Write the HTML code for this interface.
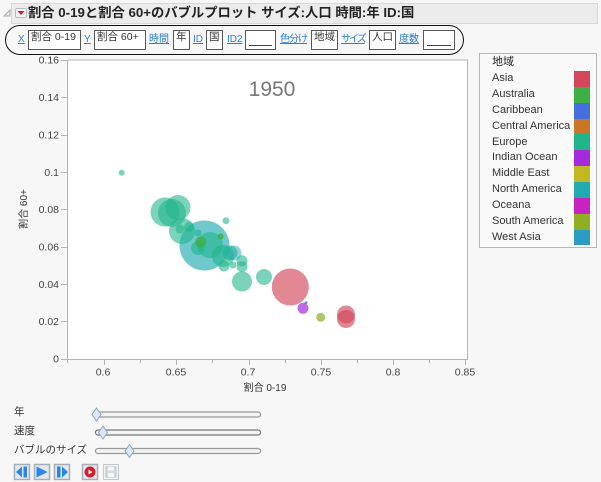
<!DOCTYPE html>
<html><head><meta charset="utf-8">
<style>
html,body{margin:0;padding:0}
body{width:601px;height:482px;overflow:hidden;background:#f7f7f7;position:relative;font-family:"Liberation Sans","Noto Sans CJK JP",sans-serif;font-size:10px;color:#333}
.a{position:absolute;white-space:nowrap;line-height:12px}
.t{font-size:11px;line-height:12px}
.l{color:#2a7fd4;text-decoration:underline;font-size:10px}
.b{position:absolute;top:30px;height:20px;border:1px solid #555;background:#fff;box-sizing:border-box;font-size:10.500px;line-height:13px;padding-top:0;padding-left:2px;white-space:nowrap;color:#333}
.u{position:absolute;left:3px;right:3px;bottom:3px;height:1px;background:#444}
</style></head><body>
<div style="position:absolute;left:11px;top:3px;width:587px;height:21px;background:#ececec;border:1px solid #d8d8d8;box-sizing:border-box"></div>
<svg style="position:absolute;left:0;top:0" width="30" height="24"><path d="M4 16L10 10V16Z" fill="#e8e8e8" stroke="#aaa"/><rect x="15.500" y="8.500" width="11" height="9" rx="1.500" fill="#f4f4f4" stroke="#bbb"/><path d="M17.500 11H24.500L21 15Z" fill="#d4142a"/></svg>
<div class="a" style="left:28px;top:5px;font-size:13.300px;line-height:16px;font-weight:bold;color:#222">割合 0-19と割合 60+のバブルプロット サイズ:人口 時間:年 ID:国</div>
<div style="position:absolute;left:5px;top:25px;width:459px;height:30px;border:1.500px solid #111;border-radius:15px;box-sizing:border-box"></div>
<span class="a l" style="left:18px;top:34px">X</span>
<div class="b" style="left:28px;width:53px">割合 0-19</div>
<span class="a l" style="left:84px;top:34px">Y</span>
<div class="b" style="left:94px;width:52px">割合 60+</div>
<span class="a l" style="left:149px;top:34px">時間</span>
<div class="b" style="left:173px;width:17px">年</div>
<span class="a l" style="left:193px;top:34px">ID</span>
<div class="b" style="left:206px;width:17px">国</div>
<span class="a l" style="left:227px;top:34px">ID2</span>
<div class="b" style="left:245px;width:31px"><div class="u"></div></div>
<span class="a l" style="left:280px;top:34px;letter-spacing:-1px">色分け</span>
<div class="b" style="left:311px;width:27px">地域</div>
<span class="a l" style="left:341px;top:34px;letter-spacing:-2px">サイズ</span>
<div class="b" style="left:369px;width:27px">人口</div>
<span class="a l" style="left:399px;top:34px">度数</span>
<div class="b" style="left:423px;width:32px"><div class="u"></div></div>

<svg style="position:absolute;left:0;top:50px" width="478" height="350" viewBox="0 50 478 350">
<rect x="67.500" y="60" width="400" height="299" fill="#fff"/>
<path d="M67.500 60V359.500H467.500V60H67.500" fill="none" stroke="#b4b4b4"/>
<g stroke="#b4b4b4" fill="none">
<path d="M61 60.500H67M61 97.500H67M61 135.500H67M61 172.500H67M61 209.500H67M61 247.500H67M61 284.500H67M61 321.500H67M61 359.500H67"/>
<path d="M104.500 360V365M176.500 360V365M249.500 360V365M321.500 360V365M393.500 360V365M465.500 360V365"/>
<path d="M140.500 360V363M212.500 360V363M285.500 360V363M357.500 360V363M429.500 360V363M67.500 360V363"/>
</g>
<g font-family="Liberation Sans,sans-serif" font-size="10.500" fill="#444" text-anchor="end">
<text x="59" y="63.500">0.16</text><text x="59" y="101">0.14</text><text x="59" y="138.500">0.12</text><text x="59" y="176">0.1</text><text x="59" y="213">0.08</text><text x="59" y="250.500">0.06</text><text x="59" y="288">0.04</text><text x="59" y="325">0.02</text><text x="59" y="362.500">0</text>
</g>
<g font-family="Liberation Sans,sans-serif" font-size="10.500" fill="#444" text-anchor="middle">
<text x="103" y="375.500">0.6</text><text x="176" y="375.500">0.65</text><text x="248" y="375.500">0.7</text><text x="321" y="375.500">0.75</text><text x="393" y="375.500">0.8</text><text x="465" y="375.500">0.85</text>
</g>
<text x="265" y="391" font-family="Liberation Sans,Noto Sans CJK JP,sans-serif" font-size="10" fill="#333" text-anchor="middle">割合 0-19</text>
<text transform="translate(27 209) rotate(-90)" font-family="Liberation Sans,Noto Sans CJK JP,sans-serif" font-size="10" fill="#333" text-anchor="middle">割合 60+</text>
<text x="272" y="96" font-family="Liberation Sans,sans-serif" font-size="21" fill="#777" text-anchor="middle">1950</text>
<circle cx="204.500" cy="245.500" r="25" fill="#22aab0" fill-opacity=".65"/>
<g fill="#22b58c" fill-opacity=".6">
<circle cx="121.700" cy="172.700" r="3"/>
<circle cx="165" cy="212" r="14.500"/><circle cx="172" cy="213" r="14"/><circle cx="178" cy="207.500" r="12.500"/>
<circle cx="182" cy="231" r="13"/><circle cx="180" cy="229" r="4.500"/><circle cx="189" cy="227" r="5"/>
<circle cx="198" cy="233" r="3.500"/>
<circle cx="226" cy="220.700" r="3.500"/>
<circle cx="210" cy="245" r="13"/><circle cx="198" cy="248" r="7"/>
<circle cx="223" cy="256" r="11"/><circle cx="230" cy="253" r="7.500"/>
<circle cx="242" cy="260.700" r="5.500"/><circle cx="242" cy="266.700" r="5.500"/><circle cx="224" cy="266" r="5.500"/><circle cx="233" cy="265" r="3.500"/>
<circle cx="242" cy="281.500" r="10"/><circle cx="264" cy="277" r="8"/>
</g>
<circle cx="234" cy="253" r="7.500" fill="#22aab0" fill-opacity=".5"/>
<g fill="#3daf45" fill-opacity=".8"><circle cx="200.700" cy="242" r="5.500"/><circle cx="220.700" cy="236.500" r="3"/></g>
<g fill="#d2475a" fill-opacity=".65"><circle cx="290.300" cy="287" r="18.500"/><circle cx="346" cy="314.500" r="9"/><circle cx="346" cy="319" r="9"/></g>
<circle cx="303" cy="308.300" r="5.500" fill="#a42bdc" fill-opacity=".7"/>
<circle cx="306" cy="302.700" r="1.500" fill="#4470dd" fill-opacity=".8"/>
<circle cx="320.700" cy="317.300" r="4.500" fill="#8fae22" fill-opacity=".7"/>
</svg>

<div style="position:absolute;left:479px;top:53px;width:118px;height:195px;border:1px solid #b8b8b8;background:#f9f9f9;box-sizing:border-box"></div>
<div class="a t" style="left:492px;top:56px;color:#222">地域</div>
<div class="a t" style="left:492px;top:72px">Asia</div>
<div class="a t" style="left:492px;top:88px">Australia</div>
<div class="a t" style="left:492px;top:104px">Caribbean</div>
<div class="a t" style="left:492px;top:120px">Central America</div>
<div class="a t" style="left:492px;top:136px">Europe</div>
<div class="a t" style="left:492px;top:151px">Indian Ocean</div>
<div class="a t" style="left:492px;top:167px">Middle East</div>
<div class="a t" style="left:492px;top:183px">North America</div>
<div class="a t" style="left:492px;top:199px">Oceana</div>
<div class="a t" style="left:492px;top:215px">South America</div>
<div class="a t" style="left:492px;top:231px">West Asia</div>
<div style="position:absolute;left:574px;top:71px;width:16px">
<div style="height:16px;background:#d2475a"></div><div style="height:16px;background:#3daf45"></div><div style="height:16px;background:#4470dd"></div><div style="height:15px;background:#cb7626"></div><div style="height:16px;background:#22b58c"></div><div style="height:16px;background:#a42bdc"></div><div style="height:16px;background:#c2b922"></div><div style="height:16px;background:#22aab0"></div><div style="height:16px;background:#c822c0"></div><div style="height:16px;background:#8fae22"></div><div style="height:15px;background:#2b9cc4"></div>
</div>

<div class="a" style="left:14px;top:406px;font-size:10.500px">年</div>
<div class="a" style="left:14px;top:425px;font-size:10.500px">速度</div>
<div class="a" style="left:14px;top:444px;font-size:10.500px">バブルのサイズ</div>
<svg style="position:absolute;left:0;top:400px" width="280" height="82" viewBox="0 400 280 82">
<g fill="#f4f4f4" stroke="#999" stroke-width="1.200">
<rect x="95.500" y="412" width="165" height="5" rx="2.500"/>
<rect x="95.500" y="430" width="165" height="5" rx="2.500" stroke="#777"/>
<rect x="95.500" y="448.500" width="165" height="5" rx="2.500"/>
</g>
<g fill="#dce8f6" stroke="#8ba6c8">
<path d="M96.500 408L101 414.500L96.500 421L92 414.500Z"/>
<path d="M103 426L107.500 432.500L103 439L98.500 432.500Z"/>
<path d="M129.500 444.500L134 451L129.500 457.500L125 451Z"/>
</g>
<g fill="#e4e8ec" stroke="#a6aeb6" stroke-width="1.500">
<rect x="14.500" y="464.500" width="15" height="15"/><rect x="34.500" y="464.500" width="15" height="15"/><rect x="54.500" y="464.500" width="15" height="15"/><rect x="82.500" y="464.500" width="15" height="15"/>
</g>
<rect x="103.500" y="464.500" width="15" height="15" fill="#f0f2f4" stroke="#c4c8cc"/>
<g fill="#2a86e8">
<path d="M16 472L22 466.500V477.500Z"/><rect x="23.500" y="466.500" width="3.500" height="11"/>
<path d="M36.500 466.500L47.500 472L36.500 477.500Z"/>
<rect x="57" y="466.500" width="3.500" height="11"/><path d="M62 466.500L68 472L62 477.500Z"/>
</g>
<circle cx="90" cy="472" r="5.500" fill="#d81c2c"/><path d="M88.500 469.500L92.500 472L88.500 474.500Z" fill="#fff"/>
<path d="M106 467H116V477H106Z" fill="#d3dae2" stroke="#bcc4cc"/><rect x="108" y="467" width="6" height="3.500" fill="#f4f6f8"/><rect x="108" y="473" width="6" height="4" fill="#f4f6f8"/>
</svg>
</body></html>
